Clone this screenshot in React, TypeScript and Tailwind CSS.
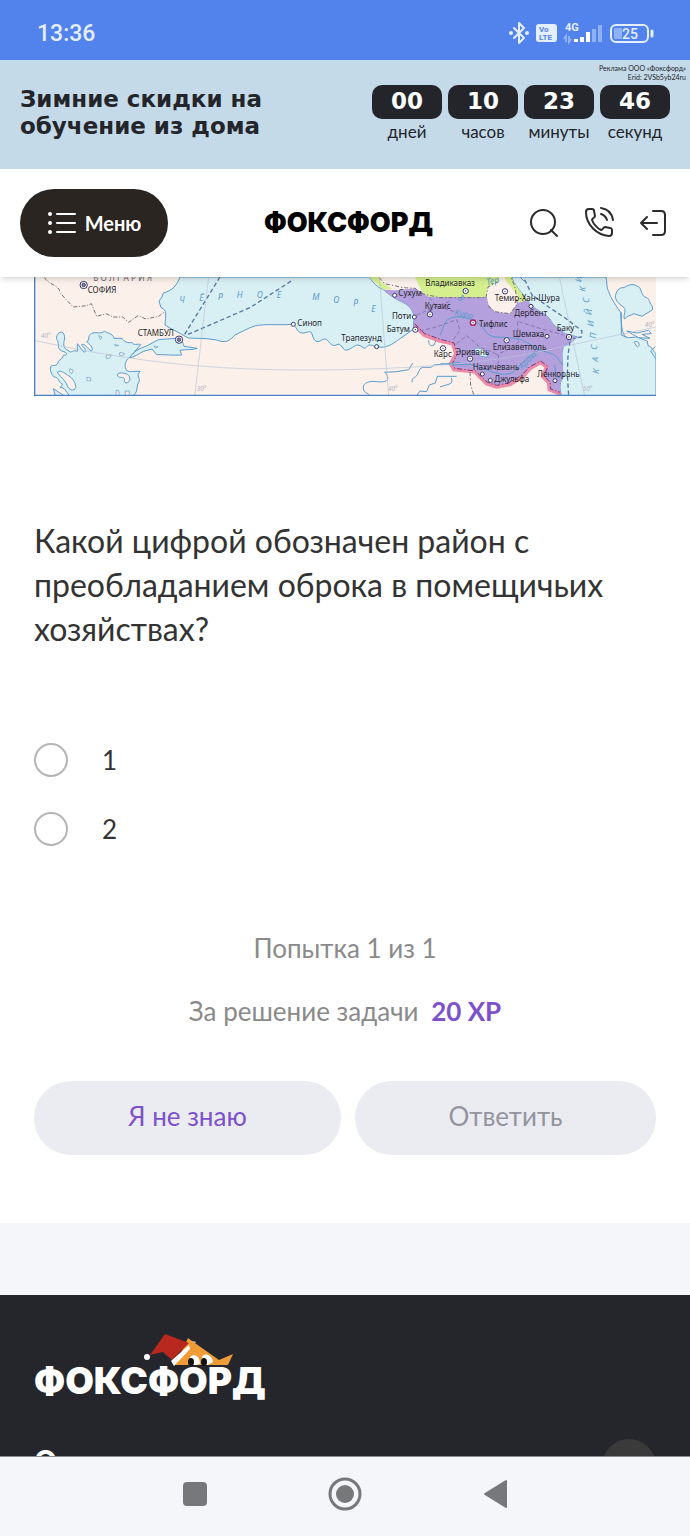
import { useState } from 'react'
import type { ReactNode } from 'react'

const timer = [
  { value: '00', label: 'дней' },
  { value: '10', label: 'часов' },
  { value: '23', label: 'минуты' },
  { value: '46', label: 'секунд' },
]

const answers = ['1', '2']

type City = { name: string; x: number; y: number; dot: [number, number]; kind?: 'capital' | 'center' | 'town' }

const cities: City[] = [
  { name: 'СОФИЯ', x: 173, y: 55, dot: [161, 30], kind: 'capital' },
  { name: 'СТАМБУЛ', x: 323, y: 184, dot: [447, 194], kind: 'capital' },
  { name: 'Синоп', x: 802, y: 154, dot: [790, 148] },
  { name: 'Трапезунд', x: 934, y: 197, dot: [1040, 215] },
  { name: 'Сухум', x: 1105, y: 64, dot: [1094, 61] },
  { name: 'Кутаис', x: 1184, y: 103, dot: [1200, 118], kind: 'center' },
  { name: 'Поти', x: 1086, y: 133, dot: [1153, 126] },
  { name: 'Батум', x: 1070, y: 171, dot: [1156, 164], kind: 'center' },
  { name: 'Карс', x: 1211, y: 247, dot: [1239, 220], kind: 'center' },
  { name: 'Владикавказ', x: 1186, y: 32, dot: [1307, 48], kind: 'center' },
  { name: 'Темир-Хан-Шура', x: 1394, y: 77, dot: [1425, 49], kind: 'center' },
  { name: 'Дербент', x: 1453, y: 123, dot: [1503, 94] },
  { name: 'Тифлис', x: 1347, y: 156, dot: [1329, 143], kind: 'center' },
  { name: 'Шемаха', x: 1448, y: 185, dot: [1551, 184] },
  { name: 'Баку', x: 1580, y: 168, dot: [1617, 186], kind: 'center' },
  { name: 'Елизаветполь', x: 1388, y: 224, dot: [1430, 196], kind: 'center' },
  { name: 'Эривань', x: 1278, y: 240, dot: [1320, 251], kind: 'center' },
  { name: 'Нахичевань', x: 1328, y: 286, dot: [1357, 297] },
  { name: 'Джульфа', x: 1393, y: 320, dot: [1381, 316] },
  { name: 'Ленкорань', x: 1522, y: 307, dot: [1575, 317] },
]

// letters of the sea names are spread along the water
const seaLetters: [string, number, number][] = [
  ['Ч', 448, 84], ['Ё', 508, 79], ['Р', 564, 74], ['Н', 620, 70], ['О', 680, 68], ['Е', 740, 68],
  ['М', 847, 74], ['О', 910, 83], ['Р', 970, 94], ['Е', 1024, 110],
]

const caspianLetters: [string, number, number][] = [
  ['К', 1706, 297], ['А', 1704, 261], ['С', 1700, 225], ['П', 1697, 191], ['И', 1690, 155],
  ['Й', 1684, 121], ['С', 1676, 84], ['К', 1666, 50], ['И', 1654, 22],
]

function CityMark({ city }: { city: City }) {
  const [cx, cy] = city.dot
  const r = city.kind === 'capital' ? 11 : city.kind === 'center' ? 8 : 6
  return (
    <g>
      <circle cx={cx} cy={cy} r={r} fill="#ffffff" stroke="#37366f" strokeWidth="3" />
      {city.kind === 'capital' && <circle cx={cx} cy={cy} r="5" fill="#8f8bc4" stroke="#37366f" strokeWidth="3" />}
      {city.kind === 'center' && <circle cx={cx} cy={cy} r="2" fill="#37366f" />}
      <text x={city.x} y={city.y} fontSize="24" fill="#26262c">{city.name}</text>
    </g>
  )
}

function MapImage() {
  return (
    <svg viewBox="12 6 1866 357" className="block w-full font-['Noto_Sans',sans-serif]" role="img" aria-label="Карта">
      <rect x="12" y="6" width="1866" height="357" fill="#fbf0ea" />

      <g fill="#d8eff4" stroke="#5a9ccc" strokeWidth="3" strokeLinejoin="round">
        {/* Чёрное море */}
        <path d="M450 6C440 32 428 46 400 54L396 66 387 78 393 98C414 106 406 122 405 150C420 162 440 168 455 178L475 189 530 191 560 195C590 207 600 195 615 180L660 158C690 143 740 152 790 148C800 155 800 172 816 174S842 160 847 180 862 203 872 197 888 189 896 200 912 214 921 209 934 214 941 222 960 222 972 214 990 212 1000 218 1010 208 1022 210 1030 217 1040 215C1070 222 1088 206 1103 196L1150 163 1152 130C1152 112 1142 94 1120 83C1095 72 1076 58 1060 44C1040 36 1028 22 1018 6Z" />
        {/* Мраморное море */}
        <path d="M300 248C310 228 330 220 350 213L385 194 440 190C455 188 458 202 462 214L502 220C490 226 468 222 450 226L455 240C430 242 400 238 380 239L366 222 340 229C325 238 312 246 300 248Z" />
        {/* Эгейское море */}
        <path d="M95 171C83 172 78 184 80 194C90 200 78 220 95 228C112 232 116 240 100 241C96 256 82 256 84 264C76 278 64 266 62 276C58 290 68 300 72 306C88 306 82 320 98 328L90 338C105 336 106 348 118 362L306 362C325 358 318 334 326 322C334 310 316 302 330 290C312 286 300 294 290 286C282 276 284 256 300 246L332 209C322 204 312 214 306 202C294 206 282 200 276 190L252 190C250 174 226 174 224 168C210 180 196 168 184 176C172 182 180 196 170 200C186 212 190 222 184 228C172 222 164 202 154 210C168 222 170 228 162 232L142 206 142 229C130 222 124 238 114 226C98 220 100 204 104 192C104 180 102 174 95 171Z" />
        {/* Каспийское море */}
        <path d="M1445 6C1452 30 1474 50 1492 76C1506 100 1540 112 1560 132C1570 156 1590 162 1606 176L1642 186 1617 206 1602 212C1594 228 1596 250 1598 268C1594 282 1602 292 1600 306C1590 320 1586 336 1595 363L1878 363 1878 236C1868 228 1868 216 1854 212L1852 198 1820 186 1796 188C1782 186 1774 176 1772 112C1756 90 1742 68 1736 50C1728 36 1732 20 1728 6Z" />
        <path d="M1756 68C1756 52 1766 36 1782 38C1794 30 1808 24 1822 34C1834 34 1832 58 1844 66C1860 68 1856 82 1866 92L1868 104 1836 124 1812 116C1800 122 1792 122 1784 132C1778 126 1788 110 1784 100C1774 90 1760 84 1756 68Z" />
        <path d="M70 341L102 362 76 362Z" />
      </g>

      {/* острова и заливы */}
      <g fill="#fbf0ea" stroke="#5a9ccc" strokeWidth="3">
        <path d="M262 300C264 290 284 294 292 298C304 306 302 322 288 324C278 320 288 312 280 308C272 306 266 310 262 300Z" />
        <path d="M82 291C92 284 104 294 112 300C124 306 134 316 138 336C132 352 116 344 112 332C104 312 90 306 82 291Z" />
        <path d="M1790 168L1820 174 1856 166 1864 176 1836 178 1860 190 1826 188ZM1812 202C1820 194 1836 208 1822 216Z" />
      </g>
      <g fill="#fbf0ea" stroke="#5a9ccc" strokeWidth="2" strokeLinejoin="round">
        <path d="M230 240L244 240 238 250 228 250ZM270 232L284 236 278 243 268 240ZM254 209L266 211 256 213ZM372 213L384 216 376 219ZM120 281L130 286 126 296 118 290ZM170 307L182 309 182 318 172 317ZM206 182L216 186 211 194ZM258 346L266 346 268 362 258 362ZM286 348L298 348 298 362 286 362Z" />
      </g>

      {/* области */}
      <path d="M1155 6L1176 50 1196 66 1280 68 1368 66 1372 40 1400 22 1410 6Z" fill="#d5ef8f" />
      <path d="M1445 6C1452 30 1474 50 1492 76L1500 90 1466 82 1462 60 1430 20 1424 6Z" fill="#d5ef8f" />
      <path d="M1018 6L1060 44 1088 42 1052 20 1048 6Z" fill="#d5ef8f" />
      <path d="M1060 44L1100 46 1155 40 1176 52 1196 66 1280 66 1370 66 1376 90 1394 110 1440 116 1462 84 1492 76C1506 100 1540 112 1560 132C1570 156 1590 162 1606 176L1642 186 1617 206 1602 212C1594 228 1596 250 1598 268L1600 306C1590 320 1586 336 1595 363L1582 358 1558 344 1556 322 1538 304 1550 276 1532 262 1500 280 1478 306 1440 328 1400 336 1370 326 1334 292 1272 284 1264 266 1278 236 1268 206 1230 198 1182 182 1152 156 1152 130C1152 112 1142 94 1120 83C1095 72 1076 58 1060 44Z" fill="#b4a0dc" />
      <path d="M1154 150L1182 180 1230 198 1268 206 1278 236 1262 266 1272 284 1334 290 1370 326 1400 336 1440 328 1478 306 1500 280 1532 262 1550 276 1538 304 1556 322 1558 344 1592 358" fill="none" stroke="#ec8aa9" strokeWidth="11" strokeLinejoin="round" />
      <path d="M1154 146L1184 176 1232 193 1272 204 1282 236 1268 264 1274 280 1336 288 1372 322 1400 331 1438 323 1476 300 1498 276 1532 258 1553 274 1543 304 1560 320 1562 342 1590 352" fill="none" stroke="#6e3c79" strokeWidth="3" strokeDasharray="16 6 4 6" />
      <path d="M1332 222C1350 214 1366 226 1374 246L1352 244Z" fill="#d8eff4" stroke="#5a9ccc" strokeWidth="2" />

      {/* границы */}
      <g fill="none" stroke="#7d6d78" strokeWidth="3" strokeDasharray="12 6 4 6">
        <path d="M44 8C56 30 88 30 90 52C104 70 118 84 130 96L170 92 184 86 200 124 228 116 250 126 278 126 296 142 324 122 348 132 386 124 404 110" strokeDasharray="12 5 3 5" />
        <path d="M1048 8L1064 26 1120 38 1155 40 1176 56 1230 68 1368 68 1374 36 1404 20" />
        <path d="M1374 92L1394 110 1440 116 1462 88 1456 40 1444 8" />
        <path d="M1320 292L1322 330 1332 362" />
      </g>
      <g fill="none" stroke="#8776ae" strokeWidth="3" strokeDasharray="12 7">
        <path d="M1160 120L1230 90 1262 78M1170 168L1220 156 1280 134 1290 166 1268 196M1280 206L1310 182 1350 216 1406 240 1402 290M1462 140L1466 200 1440 220 1400 240M1466 140L1530 160 1600 180M1198 68L1218 92 1280 112" />
      </g>

      {/* морские пути */}
      <g fill="none" stroke="#5576a2" strokeWidth="4" strokeDasharray="13 8">
        <path d="M464 178L570 6M474 178L660 98 790 14" />
        <path d="M1484 14L1506 60 1556 96 1610 132 1656 168 1654 186 1630 190M1620 200L1614 240 1612 300 1616 362" />
      </g>

      {/* реки */}
      <g fill="none" stroke="#5a9ccc" strokeWidth="3">
        <path d="M1230 180C1244 156 1238 140 1260 130S1310 126 1340 142 1362 184 1400 186 1462 190 1478 196 1520 224 1552 232 1580 250 1598 270" />
        <path d="M1232 266L1270 270 1320 268C1350 272 1372 290 1406 296S1456 290 1470 272 1500 240 1526 226M1230 336C1256 326 1272 330 1264 308M1284 74C1306 86 1300 40 1294 70" />
        <path d="M1064 292L1100 290 1136 284 1148 264M1064 290C1082 312 1074 324 1040 320S998 330 1000 342 1014 354 1020 362M1146 322C1146 300 1158 316 1166 290S1200 288 1212 270L1290 262M1160 362L1170 348 1190 350 1198 330 1216 324 1222 304 1280 304M1196 196C1196 212 1202 214 1212 210L1218 196M1470 6L1484 20" />
        <path d="M1774 112L1774 180 1792 188M1876 215L1862 228 1878 252M1574 270L1578 304 1592 310" />
      </g>

      {/* градусная сетка */}
      <g fill="none" stroke="#b9c4d8" strokeWidth="2">
        <path d="M12 196C240 246 440 274 660 282S1230 284 1480 240L1878 156M536 6L494 363M1048 6L1076 363M1588 6L1664 363" />
      </g>
      <g fontSize="19" fill="#b3b5c4" fontStyle="italic">
        <text x="33" y="190">40°</text>
        <text x="500" y="347">30°</text>
        <text x="1074" y="347">40°</text>
        <text x="1658" y="347">50°</text>
        <text x="1844" y="156">40°</text>
      </g>

      <g fontSize="26" fill="#5a9ccc" fontStyle="italic">
        {seaLetters.map(([letter, x, y]) => <text key={x} x={x} y={y}>{letter}</text>)}
        {caspianLetters.map(([letter, x, y]) => <text key={y} x={x} y={y} transform={`rotate(-84 ${x} ${y})`}>{letter}</text>)}
        <text x="1272" y="120" transform="rotate(12 1272 120)">Кура</text>
        <text x="1476" y="284" transform="rotate(-44 1476 284)">Аракс</text>
        <text x="1370" y="30" transform="rotate(-10 1370 30)">Тер</text>
      </g>
      <text x="190" y="19" fontSize="25" fill="#6b6670">Б О Л Г А Р И Я</text>

      {cities.map((city) => <CityMark key={city.name} city={city} />)}
      <circle cx="1329" cy="143" r="8" fill="none" stroke="#b02a6c" strokeWidth="4" />
      <path d="M14 6V361H1878" fill="none" stroke="#4a7fc6" strokeWidth="4" />
    </svg>
  )
}

function StatusBar() {
  return (
    <div className="flex h-15 shrink-0 items-center justify-between bg-[#5283ec] pt-2 pr-9 pl-[37px] text-[#e3efff]">
      <span className="font-['Roboto',sans-serif] text-[23px] font-medium">13:36</span>
      <svg viewBox="0 0 146 26" className="h-[26px] w-[146px]" fill="none" aria-hidden="true">
        <path d="M6 7L16 17L11 22V2L16 7L6 17" stroke="currentColor" strokeWidth="2" strokeLinejoin="round" strokeLinecap="round" />
        <circle cx="3" cy="12" r="2" fill="currentColor" />
        <circle cx="19" cy="12" r="2" fill="currentColor" />
        <rect x="28" y="3" width="21" height="18" rx="3" fill="currentColor" />
        <g fontFamily="Roboto, sans-serif" fontWeight="700">
          <text x="31" y="11" fontSize="8" fill="#5283ec">Vo</text>
          <text x="31" y="19" fontSize="8" fill="#5283ec">LTE</text>
          <text x="57" y="10" fontSize="11" fill="currentColor">4G</text>
        </g>
        <path d="M58 21V15L56 18M61 15V21L63 18" stroke="#8fb1f7" strokeWidth="2" />
        <path d="M68 18V21M74 16V21M80 11V21" stroke="#ffffff" strokeWidth="4" />
        <path d="M86 8V21M92 4V21" stroke="#8fb1f7" strokeWidth="4" />
        <rect x="103" y="4" width="37" height="17" rx="5" stroke="currentColor" strokeWidth="2" />
        <rect x="106" y="7" width="8" height="11" rx="1" fill="#8fb1f7" />
        <path d="M144 10V15" stroke="currentColor" strokeWidth="3" strokeLinecap="round" />
        <text x="114" y="18" fontSize="14" fontFamily="Roboto, sans-serif" fontWeight="500" fill="currentColor">25</text>
      </svg>
    </div>
  )
}

function SaleBanner() {
  return (
    <section className="relative flex h-[109px] shrink-0 items-start justify-between bg-[#c4dae8] pr-5 pl-5 text-[#23252b]">
      <p className="pt-[26px] font-['DejaVu_Sans',sans-serif] text-[23px] leading-[27px] font-bold">
        Зимние скидки на<br />обучение из дома
      </p>
      <p className="absolute top-1 right-1 text-right text-[7px] leading-[9px]">
        Реклама ООО «Фоксфорд»<br />Erid: 2VSb5yb24ru
      </p>
      <div className="flex gap-1.5 pt-[25px]">
        {timer.map((t) => (
          <div key={t.label} className="flex w-[70px] flex-col items-center">
            <span className="flex h-[34px] w-full items-center justify-center rounded-[10px] bg-[#23252b] pb-0.5 font-['DejaVu_Sans',sans-serif] text-[23px] font-bold text-white">{t.value}</span>
            <span className="text-[17px] leading-[26px]">{t.label}</span>
          </div>
        ))}
      </div>
    </section>
  )
}

function IconButton({ label, children }: { label: string; children: ReactNode }) {
  return (
    <button type="button" aria-label={label} className="text-[#2b2b2b]">
      <svg viewBox="0 0 32 32" className="size-8" fill="none" stroke="currentColor" strokeWidth="2" strokeLinecap="round" strokeLinejoin="round">{children}</svg>
    </button>
  )
}

function Header() {
  return (
    <header className="z-10 flex h-27 shrink-0 items-center justify-between bg-white pr-[21px] pl-5 shadow-md">
      <button type="button" className="flex h-17 w-37 items-center justify-center gap-2 rounded-full bg-[#2b2521] text-xl font-bold text-white">
        <svg viewBox="0 0 30 24" className="h-6 w-[30px]" fill="none" stroke="currentColor" strokeWidth="2" strokeLinecap="round" aria-hidden="true">
          <path d="M10 3H28M10 12H28M10 21H28" />
          <path d="M3 3H3.01M3 12H3.01M3 21H3.01" strokeWidth="4" />
        </svg>
        Меню
      </button>
      <a href="#" className="font-['Inter',sans-serif] text-[27px] font-black text-black">ФОКСФОРД</a>
      <div className="flex items-center gap-[22px]">
        <IconButton label="Поиск">
          <circle cx="14" cy="15" r="12" />
          <path d="M22 23L28 29" />
        </IconButton>
        <IconButton label="Позвонить">
          <path d="M3 5C3 3 4 2 6 2H9C11 2 11 3 11 4L12 9C12 11 9 11 9 13C11 18 14 21 18 23C20 23 20 20 22 20L27 21C29 21 29 22 29 24V26C29 28 28 29 26 29C14 28 3 18 3 5Z" />
          <path d="M18 1C25 2 29 6 30 13M18 7C21 8 23 10 24 13" />
        </IconButton>
        <IconButton label="Выйти">
          <path d="M16 4H24C27 4 28 5 28 8V24C28 27 27 28 24 28H16M20 16H4M10 10L4 16L10 22" />
        </IconButton>
      </div>
    </header>
  )
}

function FoxLogo() {
  return (
    <a href="#" aria-label="Фоксфорд" className="flex w-fit flex-col text-white">
      <svg viewBox="0 0 90 34" className="ml-[109px] h-[34px] w-[90px]" aria-hidden="true">
        <path d="M32 32L45 5L49 8L76 27L90 21L85 32Z" fill="#ef9c36" />
        <path d="M49 8L53 9L52 10Z" fill="#ffffff" />
        <path d="M7 22L22 1L46 10L29 27L20 19Z" fill="#b8281e" />
        <path d="M46 12L47 16L31 33L28 28Z" fill="#ffffff" />
        <circle cx="4" cy="24" r="3" fill="#ffffff" />
        <path d="M47 24C51 20 57 23 57 31L53 32H48Z" fill="#ffffff" />
        <path d="M59 24C62 19 69 22 70 29L65 32H61Z" fill="#ffffff" />
        <ellipse cx="48" cy="29" rx="3" ry="4" fill="#111111" />
        <ellipse cx="61" cy="29" rx="3" ry="4" fill="#111111" />
      </svg>
      <span className="font-['Inter',sans-serif] text-[37px] leading-7 font-black">ФОКСФОРД</span>
    </a>
  )
}

function NavBar() {
  return (
    <nav className="flex h-20 shrink-0 items-center justify-center gap-[114px] border-t border-[#8b8c8e] bg-[#f5f6fa] pb-1.5 text-[#77787a]">
      <button type="button" aria-label="Недавние">
        <svg viewBox="0 0 36 36" className="size-9" fill="currentColor"><rect x="6" y="6" width="24" height="24" rx="4" /></svg>
      </button>
      <button type="button" aria-label="Домой">
        <svg viewBox="0 0 36 36" className="size-9" fill="currentColor">
          <circle cx="18" cy="18" r="15" fill="none" stroke="currentColor" strokeWidth="3" />
          <circle cx="18" cy="18" r="9" />
        </svg>
      </button>
      <button type="button" aria-label="Назад">
        <svg viewBox="0 0 36 36" className="size-9" fill="currentColor" stroke="currentColor" strokeWidth="2" strokeLinejoin="round"><path d="M8 18L29 5V31Z" /></svg>
      </button>
    </nav>
  )
}

export default function App() {
  const [answer, setAnswer] = useState('')

  return (
    <div className="flex h-screen flex-col overflow-hidden bg-white font-['Lato','Noto_Sans',sans-serif] text-[#333333]">
      <StatusBar />
      <SaleBanner />
      <Header />

      <div className="flex min-h-0 flex-1 flex-col overflow-hidden">
        <main className="shrink-0 px-[34px] pb-17">
          <MapImage />

          <form onSubmit={(e) => e.preventDefault()}>
            <fieldset>
              <legend className="pt-[123px] text-[32px] leading-11">
                Какой цифрой обозначен район с преобладанием оброка в помещичьих хозяйствах?
              </legend>
              <div className="flex flex-col gap-[35px] pt-[92px]">
                {answers.map((a) => (
                  <label key={a} className="flex items-center gap-[34px] text-[26px] leading-[34px]">
                    <input
                      type="radio"
                      name="answer"
                      value={a}
                      checked={answer === a}
                      onChange={() => setAnswer(a)}
                      className="size-[34px] appearance-none rounded-full border-2 border-[#b5b5b5] bg-white checked:border-[10px] checked:border-[#7c51cb]"
                    />
                    {a}
                  </label>
                ))}
              </div>
            </fieldset>

            <div className="flex flex-col items-center gap-[27px] pt-[84px] text-[26px] leading-9 text-[#8a8a8a]">
              <p>Попытка 1 из 1</p>
              <p>За решение задачи <b className="ml-1.5 font-bold text-[#7c51cb]">20 XP</b></p>
            </div>

            <div className="flex gap-[14px] pt-[52px] text-[26px]">
              <button type="button" className="h-[74px] flex-[307] rounded-full bg-[#ebecf2] pb-1 text-[#7c51cb]">Я не знаю</button>
              <button type="submit" className="h-[74px] flex-[301] rounded-full bg-[#ebecf2] pb-1 text-[#94949e]">Ответить</button>
            </div>
          </form>
        </main>

        <div className="h-18 shrink-0 bg-[#f5f6fa]" />

        <footer className="min-h-0 flex-1 overflow-hidden bg-[#25262c] px-[34px] pt-[38px]">
          <FoxLogo />
          <div className="flex items-start justify-between pt-11">
            <h2 className="pt-1 font-['Inter',sans-serif] text-3xl font-bold text-white">О</h2>
            <button type="button" aria-label="Наверх" className="size-[54px] shrink-0 rounded-full bg-[#3b3a3b]" />
          </div>
        </footer>
      </div>

      <NavBar />
    </div>
  )
}
